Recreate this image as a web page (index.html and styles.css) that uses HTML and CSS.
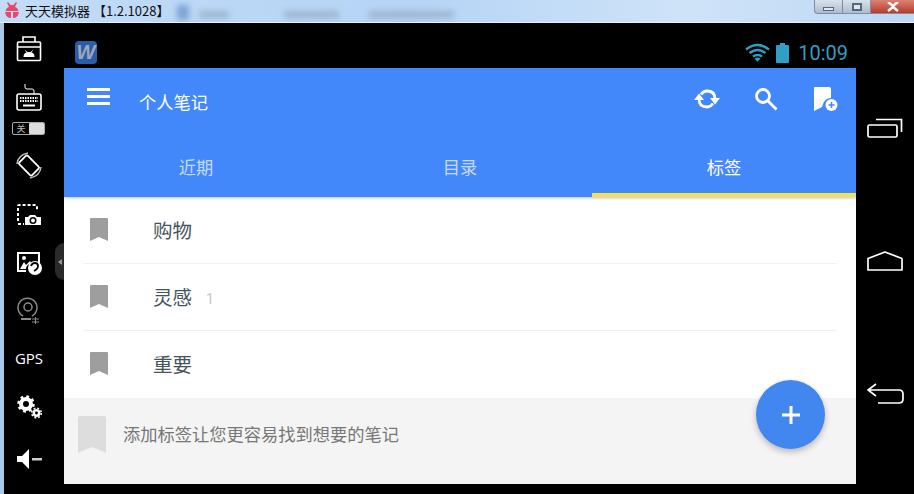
FILE: index.html
```html
<!DOCTYPE html>
<html lang="en">
<head>
  <meta charset="UTF-8">
  <meta name="viewport" content="width=device-width, initial-scale=1.0">
  <title>天天模拟器</title>
  <link rel="stylesheet" href="styles.css">
</head>
<body>
  <!-- Window title bar -->
  <header class="titlebar">
    <svg class="bug" width="16" height="18" viewBox="0 0 16 18">
      <path d="M4 1l2.500 3h3L12 1l1 1-2 3.500q3 1.500 3.500 4.500h-13Q2 7 5 5.500L3 2z" fill="#e8486f"/>
      <path d="M1 11h6v6Q2 17 1 11zM9 11h6q-1 6-6 6z" fill="#e8486f"/>
    </svg>
    <span class="app-name">天天模拟器 【1.2.1028】</span>
    <div class="blur-strip">
      <i class="blob blob-icon"></i>
      <i class="blob blob-a"></i>
      <i class="blob blob-b"></i>
      <i class="blob blob-c"></i>
    </div>
    <div class="win-btns">
      <div class="win-btn min"><i></i></div>
      <div class="win-btn max"><i></i></div>
      <div class="win-btn close">
        <svg width="14" height="10" viewBox="0 0 14 10"><path d="M2 0l5 4 5-4M2 9l5-4 5 4" fill="none" stroke="#fff" stroke-width="2.500"/></svg>
      </div>
    </div>
  </header>

  <div class="emulator">
    <!-- Emulator tool column -->
    <aside class="tools">
      <div class="tool">
        <svg width="26" height="26" viewBox="0 0 26 26" fill="none" stroke="#fff" stroke-width="1.600">
          <rect x="1.500" y="6" width="23" height="18.500" rx="1"/>
          <path d="M7 6V1h12v5M1.500 11h23"/>
          <path d="M7.500 21q0-5 5.500-5t5.500 5z" fill="#fff" stroke="none"/>
          <path d="M9.500 14.500l1.500 2M16.500 14.500L15 16.500" stroke-width="1"/>
        </svg>
      </div>
      <div class="tool">
        <svg width="28" height="28" viewBox="0 0 28 28" fill="none" stroke="#fff" stroke-width="1.600">
          <path d="M10 1v3q0 2 2 2h5q2 0 2 2v3" stroke-width="1"/>
          <rect x="2" y="11" width="24" height="16" rx="2"/>
          <path d="M5 15h18M5 18h18" stroke-width="2" stroke-dasharray="1.500 1"/>
          <path d="M8 22.500h12" stroke-width="2"/>
        </svg>
      </div>
      <div class="toggle"><span class="toggle-off">关</span><i class="toggle-knob"></i></div>
      <div class="tool">
        <svg width="26" height="27" viewBox="0 0 26 27" fill="none" stroke="#fff">
          <rect x="-6" y="-9" width="12" height="18" rx="1.500" transform="translate(13 13.500) rotate(-45)" stroke-width="1.800"/>
          <path d="M1 12Q2 3 12 1M25 15q-1 9-11 11" stroke="#bbb" stroke-width="1.500"/>
        </svg>
      </div>
      <div class="tool shot">
        <svg width="26" height="24" viewBox="0 0 26 24" fill="none" stroke="#fff">
          <path d="M2 18V3q0-1 1-1h17q1 0 1 1v4M2 21h6" stroke-width="2" stroke-dasharray="3 2"/>
          <path d="M9 22v-8h3l2-2h5l2 2h4v8z" fill="#fff" stroke="none"/>
          <circle cx="17" cy="17.500" r="3.500" fill="#000" stroke="none"/>
          <circle cx="17" cy="17.500" r="2" fill="#fff" stroke="none"/>
        </svg>
      </div>
      <div class="tool">
        <svg width="27" height="24" viewBox="0 0 27 24">
          <path d="M1 1h23v11h-2V3H3v16h7v2H1z" fill="#fff"/>
          <path d="M4 18l4-7 2 3 4-4 1 2q-5 2-5 6z" fill="#fff"/>
          <circle cx="8" cy="7" r="2" fill="#fff"/>
          <circle cx="19" cy="17" r="7" fill="#fff"/>
          <path d="M15 15q1-3 4-3 3 0 3 3t-4 5" fill="none" stroke="#000" stroke-width="1.800"/>
        </svg>
      </div>
      <div class="tool">
        <svg width="24" height="28" viewBox="0 0 24 28" fill="none" stroke="#8b8b8b" stroke-width="1.500">
          <path d="M6 19a9.500 9.500 0 1 1 9 0"/>
          <circle cx="11" cy="10" r="4"/>
          <path d="M4 22h10" stroke-width="2"/>
          <path d="M15 22h7M15 25h7M18.500 20v7" stroke-width="1"/>
        </svg>
      </div>
      <div class="tool gps">GPS</div>
      <div class="tool">
        <svg width="26" height="24" viewBox="0 0 26 24" fill="none" stroke="#fff">
          <circle cx="10" cy="9" r="5" stroke-width="4"/>
          <circle cx="10" cy="9" r="7.500" stroke-width="2.500" stroke-dasharray="2.800 3.100"/>
          <circle cx="20.500" cy="18" r="2.700" stroke-width="2.500"/>
          <circle cx="20.500" cy="18" r="4.800" stroke-width="1.600" stroke-dasharray="1.900 1.900"/>
        </svg>
      </div>
      <div class="tool volume">
        <svg width="26" height="22" viewBox="0 0 26 22" fill="#fff">
          <path d="M1 8h5l7-7v20l-7-7H1z"/>
          <path d="M16 10h10v2.500H16z" fill="#ccc"/>
        </svg>
      </div>
      <div class="handle"><i></i></div>
    </aside>

    <div class="device">
      <div class="statusbar">
        <div class="notif">W</div>
        <div class="status-right">
          <svg width="25" height="19" viewBox="0 0 25 19" fill="none" stroke="#2f9fc4" stroke-width="2.400">
            <path d="M1 6.500q11.500-9 23 0M4.500 10q8-6 16 0M8 13.500q4.500-3 9 0"/>
            <path d="M9.500 15.500q3-2 6 0l-3 3.300z" fill="#2f9fc4" stroke="none"/>
          </svg>
          <svg width="13" height="20" viewBox="0 0 13 20" fill="#2f9fc4">
            <path d="M4 0h5v2h3q1 0 1 1v16q0 1-1 1H1q-1 0-1-1V3q0-1 1-1h3z"/>
          </svg>
          <span class="clock">10:09</span>
        </div>
      </div>

      <div class="screen">
        <div class="appbar">
          <div class="toolbar">
            <div class="burger"><i></i><i></i><i></i></div>
            <div class="screen-title">个人笔记</div>
            <div class="actions">
              <svg class="act-sync" width="28" height="24" viewBox="0 0 28 24" fill="none" stroke="#fff" stroke-width="2.800">
                <path d="M8 7.500q2.500-3.500 6-3.500 8 0 8 8M6 12q0 8 8 8 3.500 0 6-3.500"/>
                <path d="M17 11h10l-5 6.500zM1 13h10L6 6.500z" fill="#fff" stroke="none"/>
              </svg>
              <svg class="act-search" width="24" height="24" viewBox="0 0 24 24" fill="none" stroke="#fff" stroke-width="2.800">
                <circle cx="9" cy="9" r="6.500"/>
                <path d="M14 14l8.500 8.500"/>
              </svg>
              <svg class="act-note" width="25" height="25" viewBox="0 0 25 25">
                <path d="M1 1q0-1 1-1h14q2 0 2 2v9q-7 0-9 9l-8 4z" fill="#fff"/>
                <circle cx="18.500" cy="18" r="6" fill="#fff"/>
                <path d="M15.500 18h6M18.500 15v6" stroke="#4388fa" stroke-width="1.600"/>
              </svg>
            </div>
          </div>
          <nav class="tabs">
            <div class="tab">近期</div>
            <div class="tab">目录</div>
            <div class="tab active">标签</div>
          </nav>
        </div>

        <ul class="tag-list">
          <li class="tag-row">
            <svg class="mark" width="18" height="23" viewBox="0 0 18 23"><path d="M0 1q0-1 1-1h16q1 0 1 1v22l-9-4-9 4z"/></svg>
            <span class="tag-name">购物</span>
          </li>
          <li class="tag-row">
            <svg class="mark" width="18" height="23" viewBox="0 0 18 23"><path d="M0 1q0-1 1-1h16q1 0 1 1v22l-9-4-9 4z"/></svg>
            <span class="tag-name">灵感</span>
            <span class="tag-count">1</span>
          </li>
          <li class="tag-row">
            <svg class="mark" width="18" height="23" viewBox="0 0 18 23"><path d="M0 1q0-1 1-1h16q1 0 1 1v22l-9-4-9 4z"/></svg>
            <span class="tag-name">重要</span>
          </li>
        </ul>

        <div class="hint">
          <svg class="hint-mark" width="28" height="37" viewBox="0 0 28 37"><path d="M0 2q0-2 2-2h24q2 0 2 2v35l-14-6-14 6z"/></svg>
          <span>添加标签让您更容易找到想要的笔记</span>
        </div>

        <button class="fab" type="button">
          <svg width="18" height="18" viewBox="0 0 18 18"><path d="M7.500 0h3v7.500H18v3h-7.500V18h-3v-7.500H0v-3h7.500z" fill="#fff"/></svg>
        </button>
      </div>
    </div>

    <!-- Android soft keys -->
    <aside class="softkeys">
      <svg width="36" height="20" viewBox="0 0 36 20" fill="none" stroke="#fff" stroke-width="1.700">
        <rect x="1" y="7" width="29" height="12" rx="1.500"/>
        <path d="M9 1.500h25.500V14"/>
      </svg>
      <svg class="key-home" width="36" height="20" viewBox="0 0 36 20" fill="none" stroke="#fff" stroke-width="1.700">
        <path d="M1 7.500L18 1l17 6.500V19H1z" stroke-linejoin="round"/>
      </svg>
      <svg width="37" height="21" viewBox="0 0 37 21" fill="none" stroke="#fff" stroke-width="1.700">
        <path d="M9 1L1 7l8 6M1 7h31q4 0 4 4v5q0 4-4 4H11"/>
      </svg>
    </aside>
  </div>
</body>
</html>
```

FILE: styles.css
```css
* {
  box-sizing: border-box;
}
html, body {
  margin: 0;
  padding: 0;
}
body {
  width: 914px;
  height: 494px;
  overflow: hidden;
  background-color: #000;
  font-family: "Noto Sans CJK SC", "Liberation Sans", sans-serif;
}

/* title bar */
.titlebar {
  display: flex;
  align-items: center;
  position: relative;
  height: 23px;
  padding: 0 0 2px 4px;
  background: linear-gradient(to right, #c3dcf6, #b5d4f6 45%, #cfe3f8 75%, #bdd8f4);
  border-bottom: 1px solid #e6f0fa;
  overflow: hidden;
}
.app-name {
  margin-left: 5px;
  font-size: 13px;
  color: #111;
  white-space: nowrap;
}
.blur-strip {
  display: flex;
  align-items: center;
  gap: 10px;
  margin-left: 8px;
  filter: blur(3px);
  opacity: 0.5;
}
.blob {
  display: block;
  height: 7px;
  margin-top: 8px;
  background-color: #7d93a5;
}
.blob-icon {
  width: 12px;
  height: 15px;
  margin-top: 4px;
  background-color: #3e6cb0;
}
.blob-a {
  width: 30px;
}
.blob-b {
  width: 55px;
  margin-left: 45px;
}
.blob-c {
  width: 85px;
  margin-left: 20px;
}
.win-btns {
  display: flex;
  position: absolute;
  top: 0;
  right: 0;
  height: 14px;
}
.win-btn {
  display: flex;
  align-items: center;
  justify-content: center;
  height: 14px;
  border-bottom: 1px solid #7c8ea0;
  border-left: 1px solid #7c8ea0;
  background: linear-gradient(to bottom, #d8e2ec, #aebccb);
}
.win-btn.min {
  width: 28px;
  border-radius: 0 0 0 4px;
}
.win-btn.min i {
  display: block;
  width: 11px;
  height: 4px;
  margin-top: 5px;
  background-color: #dfe6ee;
  border: 1px solid #55677a;
}
.win-btn.max {
  width: 28px;
}
.win-btn.max i {
  display: block;
  width: 10px;
  height: 8px;
  background-color: #dfe6ee;
  border: 2px solid #55677a;
}
.win-btn.close {
  width: 44px;
  background: linear-gradient(to bottom, #d98473, #b93a2b);
}

/* main frame */
.emulator {
  display: flex;
  height: 471px;
  background-color: #000;
}
.tools {
  display: flex;
  flex-direction: column;
  position: relative;
  width: 64px;
  padding: 2px 0 0 4px;
  background-color: #000;
  border-left: 4px solid #a9c8e8;
  color: #fff;
}
.tool {
  display: flex;
  align-items: center;
  justify-content: center;
  width: 50px;
  height: 48px;
  margin-left: -4px;
}
.toggle {
  display: flex;
  align-items: center;
  width: 33px;
  height: 13px;
  margin: 1px 0 6px 4px;
  border: 1px solid #aaa;
  border-radius: 2px;
}
.toggle-off {
  width: 16px;
  font-size: 9px;
  line-height: 11px;
  text-align: center;
  color: #bbb;
}
.toggle-knob {
  display: block;
  width: 15px;
  height: 11px;
  background-color: #ddd;
  border-radius: 1px;
}
.shot {
  margin-top: 2px;
}
.gps {
  padding-bottom: 2px;
  font-family: "Open Sans", "Liberation Sans", sans-serif;
  font-size: 15px;
}
.volume {
  margin-top: 4px;
}
.handle {
  display: flex;
  align-items: center;
  justify-content: center;
  position: absolute;
  top: 220px;
  right: 0;
  width: 9px;
  height: 37px;
  background-color: #2a2a2a;
  border-radius: 9px 0 0 9px;
}
.handle i {
  display: block;
  border: 3px solid transparent;
  border-left: 0;
  border-right: 4px solid #999;
}

/* android status bar */
.device {
  display: flex;
  flex-direction: column;
  width: 792px;
}
.statusbar {
  display: flex;
  align-items: center;
  justify-content: space-between;
  height: 45px;
  padding: 14px 8px 0 11px;
}
.notif {
  width: 22px;
  height: 23px;
  background-color: #2a5ca8;
  border-radius: 4px;
  font-family: "Liberation Sans", sans-serif;
  font-size: 20px;
  font-style: italic;
  font-weight: bold;
  line-height: 23px;
  text-align: center;
  color: #9aa9ba;
}
.status-right {
  display: flex;
  align-items: center;
}
.status-right svg + svg {
  margin-left: 6px;
}
.clock {
  margin-left: 9px;
  font-family: Roboto, sans-serif;
  font-size: 20px;
  color: #2f9fc4;
}

/* app */
.screen {
  position: relative;
  height: 416px;
  background-color: #fff;
}
.appbar {
  height: 129px;
  background-color: #4388fa;
  box-shadow: 0 1px 3px rgba(0, 0, 0, 0.25);
  color: #fff;
  position: relative;
}
.toolbar {
  display: flex;
  align-items: center;
  height: 66px;
  padding-left: 23px;
}
.burger {
  width: 23px;
  margin-bottom: 6px;
}
.burger i {
  display: block;
  height: 3px;
  margin-bottom: 4px;
  background-color: #fff;
}
.screen-title {
  margin-left: 29px;
  font-size: 17.25px;
}
.actions {
  display: flex;
  align-items: center;
  margin-left: auto;
  padding-right: 18px;
  margin-bottom: 4px;
}
.act-search {
  margin-left: 33px;
}
.act-note {
  margin-left: 35px;
}
.tabs {
  display: flex;
  height: 63px;
}
.tab {
  flex: 1;
  padding-top: 21px;
  border-bottom: 4px solid transparent;
  font-size: 17.25px;
  line-height: 24px;
  text-align: center;
  color: rgba(255, 255, 255, 0.7);
}
.tab.active {
  border-bottom-color: #f5e050;
  color: #fff;
}

/* tag rows */
.tag-list {
  list-style: none;
  height: 201px;
  margin: 0;
  padding: 0 20px;
}
.tag-row {
  display: flex;
  align-items: center;
  height: 67px;
  padding: 0 0 2px 6px;
  border-bottom: 1px solid #f1f1f1;
}
.tag-row:last-child {
  border-bottom: none;
}
.mark {
  fill: #9e9e9e;
}
.tag-name {
  margin-left: 45px;
  font-size: 19.5px;
  color: #44545e;
}
.tag-count {
  margin: 5px 0 0 14px;
  font-family: Roboto, sans-serif;
  font-size: 14px;
  color: #c4c4c4;
}

/* empty hint */
.hint {
  display: flex;
  align-items: center;
  height: 86px;
  padding: 0 0 14px 14px;
  background-color: #f4f4f4;
  font-size: 17.25px;
  color: #777;
}
.hint-mark {
  fill: #ddd;
}
.hint span {
  margin: 0 0 2px 17px;
}
.fab {
  display: flex;
  align-items: center;
  justify-content: center;
  position: absolute;
  top: 312px;
  right: 31px;
  width: 69px;
  height: 69px;
  padding: 0;
  background-color: #4286f0;
  border: none;
  border-radius: 50%;
  box-shadow: 0 3px 6px rgba(0, 0, 0, 0.25);
}

/* soft keys */
.softkeys {
  display: flex;
  flex-direction: column;
  align-items: center;
  gap: 112px;
  width: 58px;
  padding-top: 95px;
}
.key-home {
  margin-top: 1px;
}
```
